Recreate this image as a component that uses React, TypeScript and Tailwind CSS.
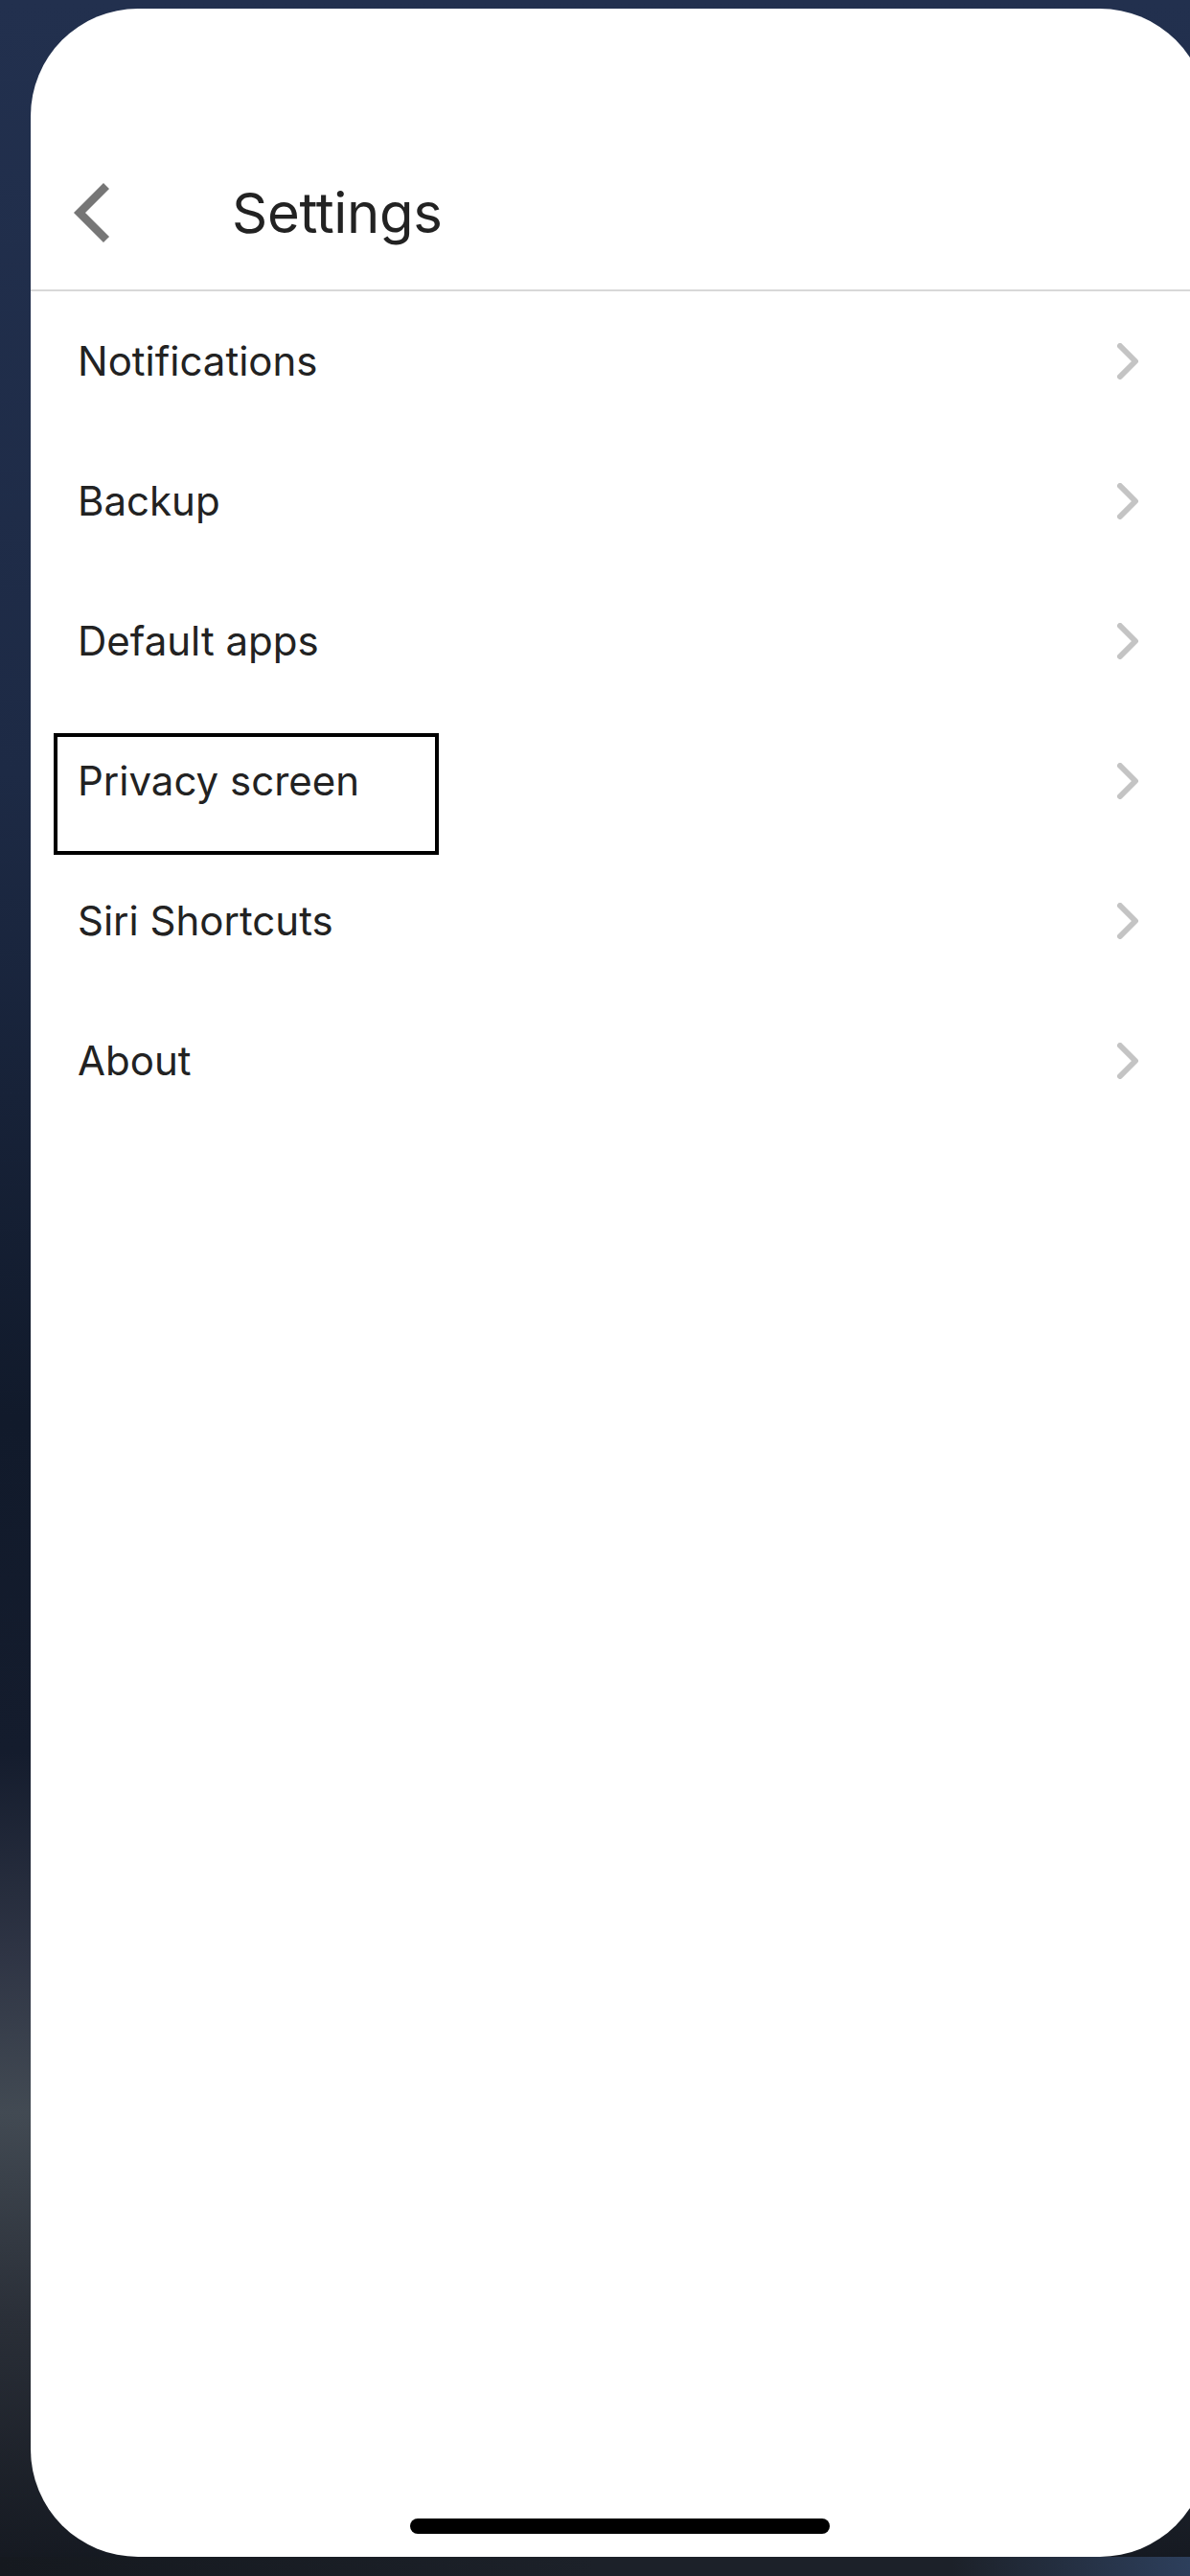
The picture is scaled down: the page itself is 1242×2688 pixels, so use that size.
import React from "react";

const items = ["Notifications", "Backup", "Default apps", "Privacy screen", "Siri Shortcuts", "About"];

function BackChevron() {
  return (
    <svg width="40" height="62" viewBox="0 0 40 62" className="shrink-0">
      <polyline points="35,3 7,31 35,59" fill="none" stroke="#767676" strokeWidth="8.5" strokeLinecap="butt" strokeLinejoin="miter" />
    </svg>
  );
}

function RowChevron() {
  return (
    <svg width="24" height="38" viewBox="0 0 24 38" className="shrink-0">
      <polyline points="3,3 19,19 3,35" fill="none" stroke="#c4c4c4" strokeWidth="6" strokeLinecap="round" strokeLinejoin="round" />
    </svg>
  );
}

export default function App() {
  return (
    <div
      className="relative w-[1242px] h-[2688px] overflow-hidden flex flex-col bg-[linear-gradient(180deg,#22304e_0%,#1d2a45_30%,#111a2b_55%,#141c2d_68%,#2f3545_76%,#424a53_82%,#2a2f38_90%,#141820_100%)]"
      style={{ fontFamily: "Inter, 'Noto Sans', sans-serif" }}
    >
      <div className="ml-[32px] mt-[9px] w-[1228px] h-[2659px] shrink-0 bg-white rounded-[112px] flex flex-col overflow-hidden">
        {/* header */}
        <div className="flex items-center h-[295px] pt-[132px] pl-[44px] border-b-2 border-[#d8d8d8]">
          <BackChevron />
          <span className="ml-[126px] text-[58px] leading-none text-[#222222] tracking-[-0.3px]">Settings</span>
        </div>

        {/* settings list */}
        <div className="relative flex flex-col">
          {items.map((label) => (
            <div key={label} className="flex items-center justify-between h-[146px] pl-[49px] pr-[70px]">
              <span className="text-[42px] leading-none text-[#222222]">{label}</span>
              <RowChevron />
            </div>
          ))}
          {/* focus outline around the privacy row */}
          <div className="absolute left-[24px] top-[461px] w-[402px] h-[127px] border-[4px] border-black pointer-events-none" />
        </div>

        <div className="flex-1" />
        <div className="self-center w-[438px] h-[16px] rounded-full bg-black mb-[24px] ml-[2px]" />
      </div>
      <div className="flex-1 bg-[linear-gradient(90deg,#15191f_0%,#1c2129_50%,#1c2129_80%,#2d3f5c_100%)]" />
    </div>
  );
}
